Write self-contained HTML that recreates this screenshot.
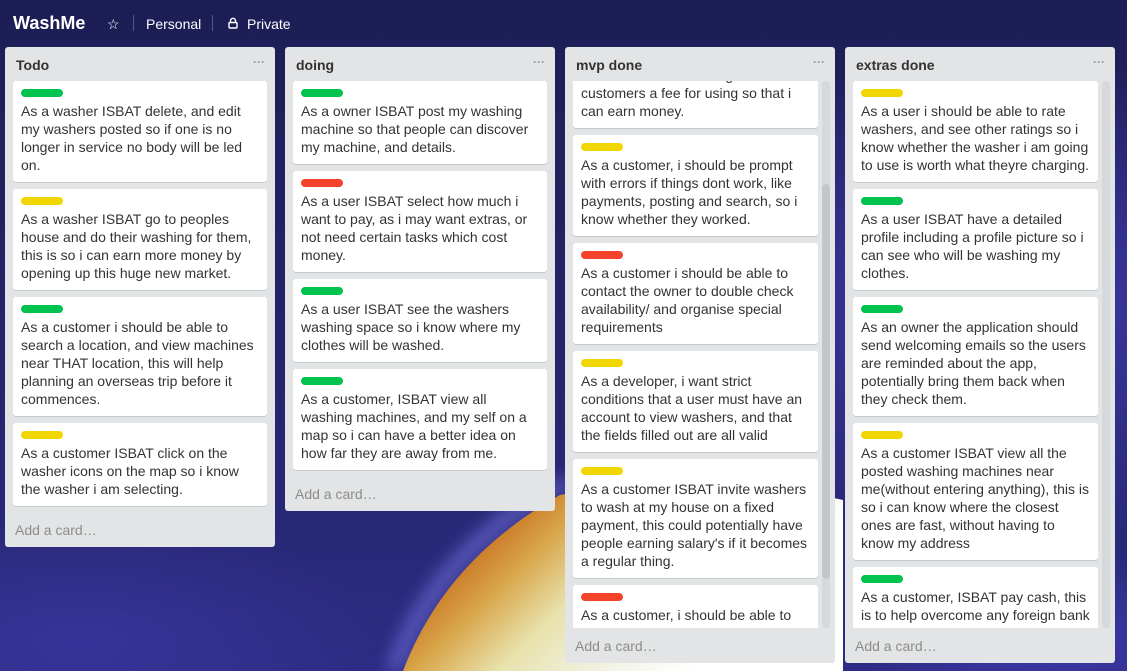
<!DOCTYPE html>
<html><head><meta charset="utf-8"><style>
*{box-sizing:border-box;margin:0;padding:0}
html,body{width:1127px;height:671px;overflow:hidden}
body{position:relative;font-family:"Liberation Sans",Arial,sans-serif;background:#24245e;}
.bgs{position:absolute;left:0;top:0;display:block}
.top{position:absolute;top:0;left:0;right:0;height:47px;color:#fff;font-size:14px}
.top .t{position:absolute;left:13px;top:13px;font-weight:bold;font-size:18px}
.top span{position:absolute;top:16px}
.sep{position:absolute;top:15px;width:1px;height:16px;background:rgba(255,255,255,.25)}
.list{position:absolute;top:47px;width:270px;background:#e2e4e6;border-radius:3px;overflow:hidden}
.h{position:absolute;left:11px;top:10px;font-weight:bold;font-size:14px;color:#333}
.dots{position:absolute;right:10px;top:8px;color:#999;font-size:12px;letter-spacing:0px;font-weight:bold}
.add{position:absolute;left:10px;font-size:14px;color:#8c8c8c}
.card{position:absolute;left:8px;width:254px;background:#fff;border-radius:3px;box-shadow:0 1px 0 #c4c9cc;padding:8px 8px 0 8px;font-size:14px;line-height:18px;color:#333;white-space:nowrap;overflow:hidden}
.clip .card{width:245px}
.lb{width:42px;height:8px;border-radius:4px;margin-bottom:5px}
.g{background:#00c24e}.y{background:#f2d600}.r{background:#f5432b}
.clip{position:absolute;left:0;top:34px;width:270px;height:547px;overflow:hidden}
.sb{position:absolute;width:8px;border-radius:4px}
</style></head><body>
<svg class="bgs" width="1127" height="671" viewBox="0 0 1127 671">
<defs>
<linearGradient id="bg" x1="0" y1="0" x2="0" y2="1"><stop offset="0" stop-color="#1d1d55"/><stop offset=".5" stop-color="#24246a"/><stop offset="1" stop-color="#2c2c84"/></linearGradient>
<linearGradient id="pg" gradientUnits="userSpaceOnUse" x1="470" y1="545" x2="640" y2="720"><stop offset="0" stop-color="#c87020"/><stop offset=".2" stop-color="#d8a448"/><stop offset=".45" stop-color="#e8e2ac"/><stop offset=".75" stop-color="#f2f2e6"/><stop offset="1" stop-color="#ffffff"/></linearGradient>
<radialGradient id="rp" cx=".5" cy=".5" r=".5"><stop offset="0" stop-color="#3e3aa8"/><stop offset="1" stop-color="#3e3aa8" stop-opacity="0"/></radialGradient>
<filter id="bl"><feGaussianBlur stdDeviation="8"/></filter>
</defs>
<rect width="1127" height="671" fill="url(#bg)"/>
<ellipse cx="1000" cy="300" rx="420" ry="250" fill="url(#rp)"/>
<ellipse cx="1050" cy="640" rx="200" ry="90" fill="url(#rp)"/>
<ellipse cx="80" cy="640" rx="300" ry="120" fill="url(#rp)" opacity=".6"/>
<path d="M385,671 C410,595 460,535 540,485 L600,470 L560,495 C480,540 430,600 403,671 Z" fill="#6a68d0" filter="url(#bl)" opacity=".7"/>
<path d="M403,671 C430,600 480,540 560,495 L700,470 L843,500 L843,671 Z" fill="url(#pg)"/>
</svg>
<div class="top"><div class="t">WashMe</div>
<span style="left:107px">☆</span><div class="sep" style="left:133px"></div>
<span style="left:146px">Personal</span><div class="sep" style="left:212px"></div>
<svg style="position:absolute;left:227px;top:17px" width="12" height="12" viewBox="0 0 12 12"><path d="M3.5 5.5V3.8a2.5 2.5 0 0 1 5 0v1.7" fill="none" stroke="#fff" stroke-width="1.4"/><rect x="2" y="5.5" width="8" height="5.5" rx="1" fill="none" stroke="#fff" stroke-width="1.4"/></svg>
<span style="left:247px">Private</span></div>

<div class="list" style="left:5px;height:500px"><div class="h">Todo</div><div class="dots">···</div>
<div class="card" style="top:34px;height:101px"><div class="lb g"></div>As a washer ISBAT delete, and edit<br>my washers posted so if one is no<br>longer in service no body will be led<br>on.</div>
<div class="card" style="top:142px;height:101px"><div class="lb y"></div>As a washer ISBAT go to peoples<br>house and do their washing for them,<br>this is so i can earn more money by<br>opening up this huge new market.</div>
<div class="card" style="top:250px;height:119px"><div class="lb g"></div>As a customer i should be able to<br>search a location, and view machines<br>near THAT location, this will help<br>planning an overseas trip before it<br>commences.</div>
<div class="card" style="top:376px;height:83px"><div class="lb y"></div>As a customer ISBAT click on the<br>washer icons on the map so i know<br>the washer i am selecting.</div>
<div class="add" style="top:475px">Add a card…</div></div>

<div class="list" style="left:285px;height:464px"><div class="h">doing</div><div class="dots">···</div>
<div class="card" style="top:34px;height:83px"><div class="lb g"></div>As a owner ISBAT post my washing<br>machine so that people can discover<br>my machine, and details.</div>
<div class="card" style="top:124px;height:101px"><div class="lb r"></div>As a user ISBAT select how much i<br>want to pay, as i may want extras, or<br>not need certain tasks which cost<br>money.</div>
<div class="card" style="top:232px;height:83px"><div class="lb g"></div>As a user ISBAT see the washers<br>washing space so i know where my<br>clothes will be washed.</div>
<div class="card" style="top:322px;height:101px"><div class="lb g"></div>As a customer, ISBAT view all<br>washing machines, and my self on a<br>map so i can have a better idea on<br>how far they are away from me.</div>
<div class="add" style="top:439px">Add a card…</div></div>

<div class="list" style="left:565px;height:616px"><div class="h">mvp done</div><div class="dots">···</div>
<div class="clip">
<div class="card" style="top:-40px;height:87px;padding-top:25px">As a owner ISBAT charge the<br>customers a fee for using so that i<br>can earn money.</div>
<div class="card" style="top:54px;height:101px"><div class="lb y"></div>As a customer, i should be prompt<br>with errors if things dont work, like<br>payments, posting and search, so i<br>know whether they worked.</div>
<div class="card" style="top:162px;height:101px"><div class="lb r"></div>As a customer i should be able to<br>contact the owner to double check<br>availability/ and organise special<br>requirements</div>
<div class="card" style="top:270px;height:101px"><div class="lb y"></div>As a developer, i want strict<br>conditions that a user must have an<br>account to view washers, and that<br>the fields filled out are all valid</div>
<div class="card" style="top:378px;height:119px"><div class="lb y"></div>As a customer ISBAT invite washers<br>to wash at my house on a fixed<br>payment, this could potentially have<br>people earning salary's if it becomes<br>a regular thing.</div>
<div class="card" style="top:504px;height:101px"><div class="lb r"></div>As a customer, i should be able to<br>pay using a fee or something</div>
</div>
<div class="sb" style="left:257px;top:34px;height:547px;background:#d6d9dc"></div>
<div class="sb" style="left:257px;top:137px;height:395px;background:#c3c7ca"></div>
<div class="add" style="top:591px">Add a card…</div></div>

<div class="list" style="left:845px;height:616px"><div class="h">extras done</div><div class="dots">···</div>
<div class="clip">
<div class="card" style="top:0px;height:101px"><div class="lb y"></div>As a user i should be able to rate<br>washers, and see other ratings so i<br>know whether the washer i am going<br>to use is worth what theyre charging.</div>
<div class="card" style="top:108px;height:101px"><div class="lb g"></div>As a user ISBAT have a detailed<br>profile including a profile picture so i<br>can see who will be washing my<br>clothes.</div>
<div class="card" style="top:216px;height:119px"><div class="lb g"></div>As an owner the application should<br>send welcoming emails so the users<br>are reminded about the app,<br>potentially bring them back when<br>they check them.</div>
<div class="card" style="top:342px;height:137px"><div class="lb y"></div>As a customer ISBAT view all the<br>posted washing machines near<br>me(without entering anything), this is<br>so i can know where the closest<br>ones are fast, without having to<br>know my address</div>
<div class="card" style="top:486px;height:101px"><div class="lb g"></div>As a customer, ISBAT pay cash, this<br>is to help overcome any foreign bank<br>issues.</div>
</div>
<div class="sb" style="left:257px;top:34px;height:547px;background:#d6d9dc"></div>
<div class="add" style="top:591px">Add a card…</div></div>
</body></html>
